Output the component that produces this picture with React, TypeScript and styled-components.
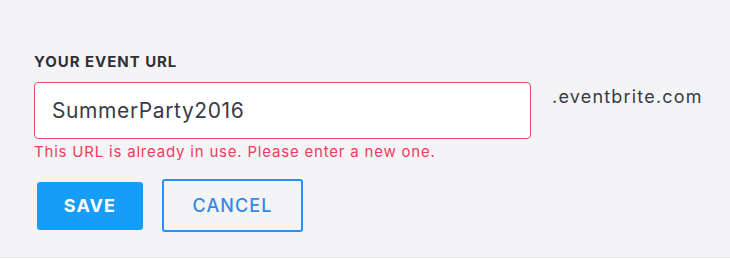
import React from 'react';
import styled, { createGlobalStyle } from 'styled-components';

const GlobalStyle = createGlobalStyle`
  html, body {
    margin: 0;
    padding: 0;
    background: #ffffff;
  }
  body {
    font-family: Inter, "Liberation Sans", sans-serif;
    -webkit-font-smoothing: antialiased;
  }
`;

export default function App() {
  const [url, setUrl] = React.useState('SummerParty2016');

  return (
    <>
      <GlobalStyle />
      <Panel>
        <Label htmlFor="event-url">Your event URL</Label>
        <Row>
          <Field>
            <UrlInput
              id="event-url"
              value={url}
              hasError
              onChange={e => setUrl(e.target.value)}
            />
            <ErrorText>This URL is already in use. Please enter a new one.</ErrorText>
          </Field>
          <Suffix>.eventbrite.com</Suffix>
        </Row>
        <Actions>
          <Button variant="primary">Save</Button>
          <Button variant="outline">Cancel</Button>
        </Actions>
      </Panel>
    </>
  );
}

const Panel = styled.div`
  box-sizing: border-box;
  height: 258px;
  padding: 53px 0 0 34px;
  background: #f4f4f7;
  border-bottom: 1px solid #e7e7eb;
`;

const Label = styled.label`
  display: block;
  font-size: 15px;
  line-height: 18px;
  font-weight: 700;
  letter-spacing: 0.95px;
  text-transform: uppercase;
  color: #2f2f38;
  margin-bottom: 11px;
`;

const Row = styled.div`
  display: flex;
  align-items: flex-start;
`;

const Field = styled.div`
  display: flex;
  flex-direction: column;
`;

const UrlInput = styled.input<{ hasError?: boolean }>`
  box-sizing: border-box;
  width: 497px;
  height: 57px;
  padding: 0 17px;
  border: 1.5px solid ${p => (p.hasError ? '#f2456b' : '#d5d5dc')};
  border-radius: 4px;
  background: #ffffff;
  font-family: Inter, "Liberation Sans", sans-serif;
  font-size: 21px;
  letter-spacing: 0.6px;
  color: #3a3b44;
  outline: none;
`;

const ErrorText = styled.div`
  margin-top: 4px;
  font-size: 15px;
  line-height: 18px;
  letter-spacing: 0.8px;
  color: #f13a60;
`;

const Suffix = styled.span`
  margin: 4px 0 0 21px;
  font-size: 18px;
  line-height: 22px;
  letter-spacing: 1.2px;
  color: #3a3b44;
`;

const Actions = styled.div`
  display: flex;
  align-items: center;
  gap: 19px;
  margin: 18px 0 0 3px;
`;

const Button = styled.button<{ variant: 'primary' | 'outline' }>`
  box-sizing: border-box;
  height: ${p => (p.variant === 'primary' ? '48px' : '53px')};
  width: ${p => (p.variant === 'primary' ? '106px' : '141px')};
  border-radius: 3px;
  border: 2px solid ${p => (p.variant === 'primary' ? '#169df8' : '#2a8ff0')};
  background: ${p => (p.variant === 'primary' ? '#169df8' : 'transparent')};
  color: ${p => (p.variant === 'primary' ? '#ffffff' : '#3388e6')};
  font-family: Inter, "Liberation Sans", sans-serif;
  font-size: 18px;
  font-weight: ${p => (p.variant === 'primary' ? 700 : 500)};
  letter-spacing: 1.1px;
  text-transform: uppercase;
  padding: 0;
  cursor: pointer;
`;
